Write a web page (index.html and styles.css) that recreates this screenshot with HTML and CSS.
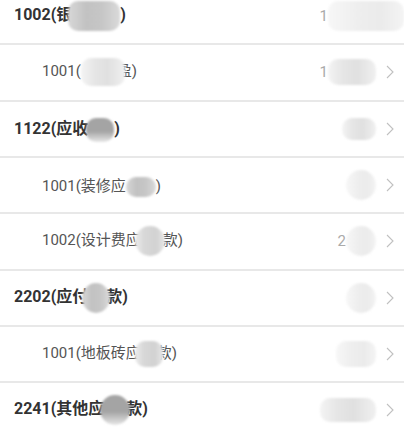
FILE: index.html
```html
<!DOCTYPE html>
<html lang="zh-CN">
<head>
    <meta charset="UTF-8">
    <meta name="viewport" content="width=device-width, initial-scale=1.0">
    <title>科目列表</title>
    <link rel="stylesheet" href="styles.css">
</head>
<body>
    <div class="list">
        <div class="row top">
            <span class="name">1002(银<i class="mask dark w-row1"></i>)</span>
            <span class="value edge">1<i class="mask light w-val1"></i></span>
        </div>

        <div class="row child">
            <span class="name">1001(<i class="mask pale w-row2"></i>盈)</span>
            <span class="value">1<i class="mask pale w-val2"></i></span>
            <svg class="chevron" viewBox="0 0 8 14"><polyline points="1,1 7,7 1,13"/></svg>
        </div>

        <div class="row top">
            <span class="name">1122(应收<i class="mask darker w-row3"></i>)</span>
            <span class="value"><i class="mask pale w-val3"></i></span>
            <svg class="chevron" viewBox="0 0 8 14"><polyline points="1,1 7,7 1,13"/></svg>
        </div>

        <div class="row child">
            <span class="name">1001(装修应<i class="mask dark w-row4"></i>)</span>
            <span class="value"><i class="mask light round w-val4"></i></span>
            <svg class="chevron" viewBox="0 0 8 14"><polyline points="1,1 7,7 1,13"/></svg>
        </div>

        <div class="row child">
            <span class="name">1002(设计费应<i class="mask mid round w-row5"></i>款)</span>
            <span class="value">2<i class="mask light round w-val5"></i></span>
            <svg class="chevron" viewBox="0 0 8 14"><polyline points="1,1 7,7 1,13"/></svg>
        </div>

        <div class="row top">
            <span class="name">2202(应付<i class="mask dark round w-row6"></i>款)</span>
            <span class="value"><i class="mask light round w-val6"></i></span>
            <svg class="chevron" viewBox="0 0 8 14"><polyline points="1,1 7,7 1,13"/></svg>
        </div>

        <div class="row child">
            <span class="name">1001(地板砖应<i class="mask mid w-row7"></i>款)</span>
            <span class="value"><i class="mask light w-val7"></i></span>
            <svg class="chevron" viewBox="0 0 8 14"><polyline points="1,1 7,7 1,13"/></svg>
        </div>

        <div class="row top">
            <span class="name">2241(其他应<i class="mask darker round w-row8"></i>款)</span>
            <span class="value"><i class="mask pale w-val8"></i></span>
            <svg class="chevron" viewBox="0 0 8 14"><polyline points="1,1 7,7 1,13"/></svg>
        </div>
    </div>
</body>
</html>
```

FILE: styles.css
```css
body {
    margin: 0;
    background-color: #fff;
    font-family: Roboto, "Noto Sans CJK SC", sans-serif;
    overflow: hidden;
}
.list {
    margin-top: -11px;
}
.row {
    display: flex;
    align-items: center;
    box-sizing: border-box;
    height: 56.33px;
    padding-right: 10px;
    border-bottom: 2px solid #e8e8e8;
}
.row.top {
    padding-left: 14px;
}
.row.top .name {
    font-size: 16px;
    font-weight: bold;
    color: #333;
}
.row.child {
    padding-left: 42px;
}
.row.child .name {
    font-size: 15px;
    color: #555;
}
.name {
    flex: 1;
    white-space: nowrap;
}
.value {
    display: flex;
    align-items: center;
    font-size: 15px;
    color: #aaa;
    margin-right: 10px;
}
.value.edge {
    margin-right: -10px;
}
.chevron {
    width: 8px;
    height: 14px;
    fill: none;
    stroke: #c0c0c0;
    stroke-width: 1.1;
}
.mask {
    display: inline-block;
    position: relative;
    vertical-align: middle;
    height: 28px;
    border-radius: 10px;
    filter: blur(0.8px);
}
.mask.round {
    border-radius: 50%;
}
.mask.pale {
    background: linear-gradient(90deg, #f4f4f4, #e6e6e6 30%, #e0e0e0 60%, #f0f0f0);
}
.mask.light {
    background: linear-gradient(90deg, #f7f7f7, #eeeeee 40%, #ebebeb 70%, #f4f4f4);
}
.mask.mid {
    background: linear-gradient(90deg, #ececec, #d8d8d8 30%, #d2d2d2 70%, #e6e6e6);
}
.mask.dark {
    background: linear-gradient(90deg, #d8d8d8, #c2c2c2 35%, #c6c6c6 65%, #dadada);
}
.mask.darker {
    background: linear-gradient(180deg, #a4a4a4 55%, #e8e8e8);
}
.w-row1 { width: 52px; height: 30px; margin-left: -4px; }
.w-row2 { width: 44px; margin-right: -8px; }
.w-row3 { width: 28px; height: 24px; margin-left: -2px; }
.w-row4 { width: 30px; height: 20px; }
.w-row5 { width: 30px; height: 30px; margin-left: -6px; margin-right: -2px; }
.w-row6 { width: 28px; height: 30px; margin-left: -6px; margin-right: -4px; }
.w-row7 { width: 28px; height: 26px; margin-left: -6px; margin-right: -6px; }
.w-row8 { width: 30px; height: 30px; margin-left: -4px; margin-right: -4px; }
.w-val1 { width: 76px; height: 30px; }
.w-val2 { width: 48px; height: 26px; }
.w-val3 { width: 34px; height: 22px; }
.w-val4 { width: 30px; height: 30px; }
.w-val5 { width: 30px; height: 30px; }
.w-val6 { width: 30px; height: 30px; }
.w-val7 { width: 40px; height: 26px; }
.w-val8 { width: 56px; height: 24px; }
```
